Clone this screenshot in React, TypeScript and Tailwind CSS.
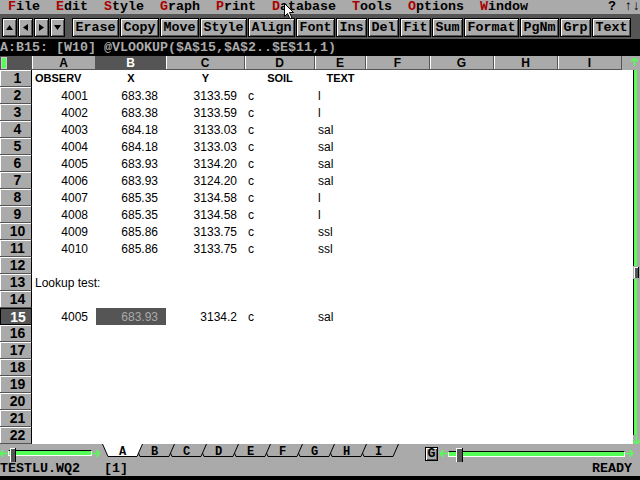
import React from 'react';

const mono = "font-['Liberation_Mono',monospace] font-bold text-[13.33px]";
const sans = "font-['Liberation_Sans',Arial,sans-serif]";

type Align = 'l' | 'r' | 'c';
interface Cell {
  t: string;
  a: Align;
  bold?: boolean;
}

const cols = [
  { k: 'A', w: 'w-[64px]' },
  { k: 'B', w: 'w-[70px]' },
  { k: 'C', w: 'w-[79px]' },
  { k: 'D', w: 'w-[70px]' },
  { k: 'E', w: 'w-[51px]' },
  { k: 'F', w: 'w-[64px]' },
  { k: 'G', w: 'w-[64px]' },
  { k: 'H', w: 'w-[64px]' },
  { k: 'I', w: 'w-[64px]' },
];

const data: [string, string, string, string, string][] = [
  ['4001', '683.38', '3133.59', 'c', 'l'],
  ['4002', '683.38', '3133.59', 'c', 'l'],
  ['4003', '684.18', '3133.03', 'c', 'sal'],
  ['4004', '684.18', '3133.03', 'c', 'sal'],
  ['4005', '683.93', '3134.20', 'c', 'sal'],
  ['4006', '683.93', '3124.20', 'c', 'sal'],
  ['4007', '685.35', '3134.58', 'c', 'l'],
  ['4008', '685.35', '3134.58', 'c', 'l'],
  ['4009', '685.86', '3133.75', 'c', 'ssl'],
  ['4010', '685.86', '3133.75', 'c', 'ssl'],
];

function numRow(r: string[]): Cell[] {
  return [
    { t: r[0], a: 'r' },
    { t: r[1], a: 'r' },
    { t: r[2], a: 'r' },
    { t: r[3], a: 'l' },
    { t: r[4], a: 'l' },
  ];
}

// rows 1..22
const rows: Cell[][] = [
  [
    { t: 'OBSERV', a: 'l', bold: true },
    { t: 'X', a: 'c', bold: true },
    { t: 'Y', a: 'c', bold: true },
    { t: 'SOIL', a: 'c', bold: true },
    { t: 'TEXT', a: 'c', bold: true },
  ],
  ...data.map(numRow),
  [],
  [{ t: 'Lookup test:', a: 'l' }],
  [],
  numRow(['4005', '683.93', '3134.2', 'c', 'sal']),
  [],
  [],
  [],
  [],
  [],
  [],
  [],
];

const menu = ['File', 'Edit', 'Style', 'Graph', 'Print', 'Database', 'Tools', 'Options', 'Window'];
const tools = ['Erase', 'Copy', 'Move', 'Style', 'Align', 'Font', 'Ins', 'Del', 'Fit', 'Sum', 'Format', 'PgNm', 'Grp', 'Text'];
const toolW: Record<string, string> = {
  3: 'w-[31px]',
  4: 'w-[39px]',
  5: 'w-[47px]',
  6: 'w-[55px]',
};

const btn = 'bg-[#aaaaaa] border border-black shadow-[inset_1px_1px_0_#fff,inset_-1px_-1px_0_#555]';

function Arrow({ dir }: { dir: 'up' | 'left' | 'right' | 'down' }) {
  const pts = {
    up: '3.5,1 7,6 0,6',
    down: '0,1 7,1 3.5,6',
    left: '1,3.5 6,0 6,7',
    right: '1,0 6,3.5 1,7',
  }[dir];
  return (
    <svg width="7" height="7" viewBox="0 0 7 7">
      <polygon points={pts} fill="#000" />
    </svg>
  );
}

function GreenArrow({ dir }: { dir: 'up' | 'down' | 'left' | 'right' }) {
  const p = {
    up: 'M3.5 0 L0 3.5 M3.5 0 L7 3.5 M3.5 0 L3.5 8',
    down: 'M3.5 8 L0 4.5 M3.5 8 L7 4.5 M3.5 0 L3.5 8',
    left: 'M0 3.5 L3.5 0 M0 3.5 L3.5 7 M0 3.5 L8 3.5',
    right: 'M8 3.5 L4.5 0 M8 3.5 L4.5 7 M0 3.5 L8 3.5',
  }[dir];
  const horiz = dir === 'left' || dir === 'right';
  return (
    <svg width={horiz ? 8 : 7} height={horiz ? 7 : 8} viewBox={horiz ? '0 0 8 7' : '0 0 7 8'}>
      <path d={p} stroke="#55ff55" strokeWidth="1.6" fill="none" />
    </svg>
  );
}

function Tabs() {
  const letters = ['A', 'B', 'C', 'D', 'E', 'F', 'G', 'H', 'I'];
  const poly = (i: number) => {
    const c = 22.5 + 32 * i;
    return `${c - 20},0 ${c - 14.5},12.5 ${c + 14.5},12.5 ${c + 20},0`;
  };
  return (
    <svg width="300" height="18" viewBox="0 0 300 18" className="block">
      {letters
        .map((l, i) => (
          <g key={l}>
            <polyline
              points={poly(i)}
              fill={i === 0 ? '#fff' : '#aaaaaa'}
              stroke="#000"
              strokeWidth="1"
            />
            <text
              x={22.5 + 32 * i}
              y={10.5}
              textAnchor="middle"
              fontFamily="Liberation Mono, monospace"
              fontWeight="bold"
              fontSize="12"
              fill="#000"
            >
              {l}
            </text>
          </g>
        ))
        .reverse()}
    </svg>
  );
}

export default function App() {
  return (
    <div className="relative w-[640px] h-[480px] overflow-hidden bg-black flex flex-col select-none">
      {/* Menu bar */}
      <div className={`h-[14px] bg-[#aaaaaa] text-black whitespace-pre leading-[14px] ${mono}`}>
        {' '}
        {menu.map((m, i) => (
          <React.Fragment key={m}>
            <span className="text-[#aa0000]">{m[0]}</span>
            {m.slice(1)}
            {i < menu.length - 1 ? '  ' : '          '}
          </React.Fragment>
        ))}
        {'? ↑↓'}
      </div>

      {/* Toolbar */}
      <div className="h-[25px] bg-[#555555] flex items-start pt-[4px] pl-[2px]">
        <div className="flex gap-[1px]">
          {(['up', 'left', 'right', 'down'] as const).map((d) => (
            <div key={d} className={`w-[15px] h-[19px] flex items-center justify-center ${btn}`}>
              <Arrow dir={d} />
            </div>
          ))}
        </div>
        <div className="flex gap-[1px] ml-[7px]">
          {tools.map((t, i) => (
            <div
              key={t + i}
              className={`h-[19px] ${toolW[t.length]} flex items-center justify-center text-black leading-none ${btn} ${mono}`}
            >
              {t}
            </div>
          ))}
        </div>
      </div>

      {/* Formula line */}
      <div className={`h-[17px] bg-black text-[#aaaaaa] whitespace-pre leading-[17px] ${mono}`}>
        A:B15: [W10] @VLOOKUP($A$15,$A$2..$E$11,1)
      </div>

      {/* Column headers */}
      <div className="h-[14px] flex bg-[#aaaaaa]">
        <div className="w-[32px] h-full bg-[#555555] flex items-center">
          <div className="ml-[1px] w-[6px] h-[12px] bg-[#55ff55] border border-[#cccccc]" />
        </div>
        {cols.map((c) => (
          <div
            key={c.k}
            className={`${c.w} h-full flex items-center justify-center border-r border-b border-[#555555] shadow-[inset_1px_0_0_#fff] text-[12px] font-bold leading-none ${sans} ${
              c.k === 'B' ? 'bg-[#555555] text-white shadow-none' : 'text-black'
            }`}
          >
            {c.k}
          </div>
        ))}
        <div className="flex-1 h-full flex items-start justify-end pr-[2px] pt-[2px]">
          <GreenArrow dir="up" />
        </div>
      </div>

      {/* Sheet body */}
      <div className="h-[374px] flex bg-white">
        <div className="w-[633px]">
          {rows.map((cells, ri) => {
            const n = ri + 1;
            const cur = n === 15;
            return (
              <div key={n} className="h-[17px] flex">
                <div
                  className={`w-[32px] h-full flex items-center justify-center pl-[4px] text-[14px] font-bold leading-none ${sans} ${
                    cur
                      ? 'bg-[#555555] text-white border border-black'
                      : 'bg-[#aaaaaa] text-black border-b border-r border-b-[#555555] border-r-black shadow-[inset_1px_1px_0_#fff]'
                  }`}
                >
                  {n}
                </div>
                {cols.map((c, ci) => {
                  const cell = cells[ci];
                  const sel = cur && c.k === 'B';
                  return (
                    <div
                      key={c.k}
                      className={`${c.w} h-full flex items-center overflow-visible whitespace-pre leading-none ${sans} ${
                        cell?.bold ? 'text-[11px] font-bold' : 'text-[12px]'
                      } ${
                        cell?.a === 'r'
                          ? 'justify-end pr-[8px]'
                          : cell?.a === 'c'
                            ? 'justify-center'
                            : 'justify-start pl-[3px]'
                      } ${sel ? 'bg-[#555555] text-[#aaaaaa]' : 'text-black'}`}
                    >
                      {cell?.t ?? ''}
                    </div>
                  );
                })}
                <div className="w-[11px] h-full" />
              </div>
            );
          })}
        </div>
        {/* vertical scroll bar */}
        <div className="w-[7px] h-full flex flex-col bg-[#aaaaaa]">
          <div className="h-[196px] flex">
            <div className="w-[1px] bg-black" />
            <div className="w-[3px] bg-[#55ff55]" />
          </div>
          <div className="h-[13px] flex items-center">
            <div className="ml-[1px] w-[5px] h-[11px] bg-[#555555] border-r border-black shadow-[inset_1px_1px_0_#fff]" />
          </div>
          <div className="h-[156px] flex">
            <div className="w-[1px] bg-black" />
            <div className="w-[3px] bg-[#55ff55]" />
          </div>
          <div className="flex-1 flex items-end">
            <GreenArrow dir="down" />
          </div>
        </div>
      </div>

      {/* Tab row */}
      <div className="h-[18px] bg-[#aaaaaa] flex">
        <div className="w-[100px] h-full relative flex items-center">
          <GreenArrow dir="left" />
          <div className="w-[88px] h-[6px] bg-[#55ff55] border border-white border-t-black" />
          <GreenArrow dir="right" />
          <div className="absolute left-[10px] top-[4px] w-[6px] h-[14px] bg-[#555555] border-r border-black shadow-[inset_1px_1px_0_#fff]" />
        </div>
        <Tabs />
        <div className="w-[25px]" />
        <div className="flex-1 h-full relative flex items-center pt-[1px]">
          <div
            className={`w-[13px] h-[14px] flex items-center justify-center text-black text-[12px] leading-none ${btn} ${mono}`}
          >
            G
          </div>
          <div className="ml-[2px]">
            <GreenArrow dir="left" />
          </div>
          <div className="w-[177px] h-[6px] bg-[#55ff55] border border-white border-t-black" />
          <GreenArrow dir="right" />
          <div className="absolute left-[31px] top-[4px] w-[7px] h-[14px] bg-[#555555] border-r border-black shadow-[inset_1px_1px_0_#fff]" />
        </div>
      </div>

      {/* Status line */}
      <div
        className={`h-[14px] bg-[#aaaaaa] text-black whitespace-pre leading-[14px] flex justify-between pr-[8px] ${mono}`}
      >
        <span>{'TESTLU.WQ2   [1]'}</span>
        <span>READY</span>
      </div>
      <div className="flex-1 bg-black" />

      {/* mouse pointer */}
      <svg className="absolute left-[284px] top-[3px]" width="12" height="17" viewBox="0 0 12 17">
        <path
          d="M0.5 0.5 L0.5 13.5 L3.5 10.5 L6 16 L8 15 L5.5 9.5 L9.5 9.5 Z"
          fill="#fff"
          stroke="#000"
          strokeWidth="1"
        />
      </svg>
    </div>
  );
}
